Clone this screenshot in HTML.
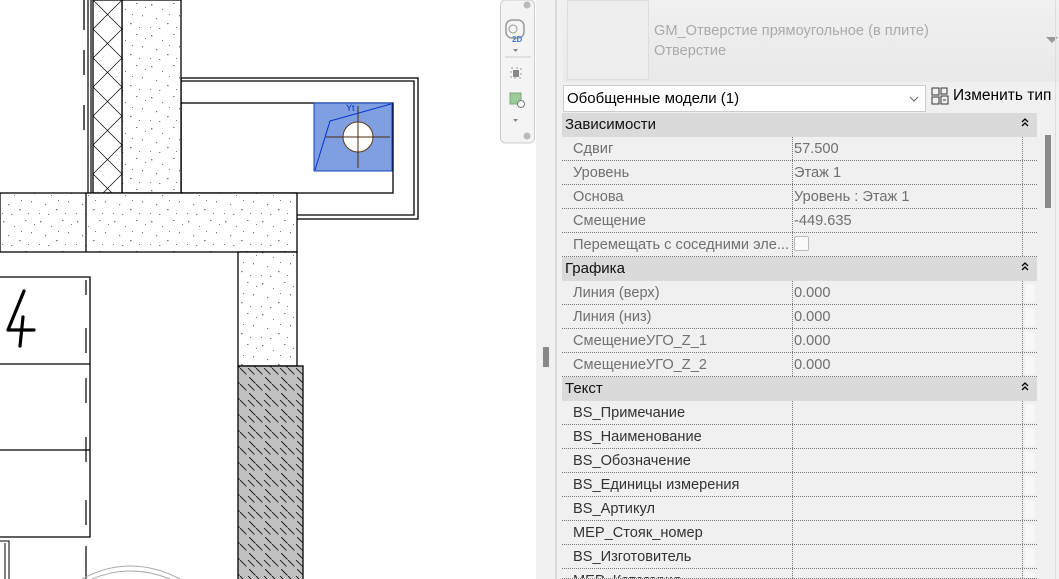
<!DOCTYPE html>
<html style="width:1059px;height:579px;overflow:hidden"><head><meta charset="utf-8"><style>
*{margin:0;padding:0;box-sizing:border-box}
body{width:1059px;height:579px;overflow:hidden;background:#fff;position:relative;font-family:"Segoe UI","Liberation Sans","DejaVu Sans",sans-serif;}
.p{position:absolute}
.row{position:absolute;left:562px;width:475px;height:24px;border-bottom:1px dotted #777;font-size:14.6px;line-height:24px;color:#333;overflow:hidden}
.row .n{position:absolute;left:11px;top:0;white-space:nowrap}
.row.g .n,.row.g .v{color:#707070}
.row .v{position:absolute;left:232px;top:0}
.row .d1{position:absolute;left:230px;top:0;bottom:0;border-left:1px dotted #777}
.row .d2{position:absolute;left:460px;top:0;bottom:0;border-left:1px dotted #777}
.row .c{position:absolute;left:463px;top:3px;width:10px;height:18px;background:#f7f7f7;border-radius:2px}
.hdr{position:absolute;left:562px;width:475px;height:24px;background:#dadada;font-size:15px;line-height:23px;color:#111;padding-left:3px}
.hdr svg{position:absolute;right:8px;top:4px}
</style></head><body>
<svg class="p" style="left:0;top:0" width="536" height="579" viewBox="0 0 536 579">
<defs>
<pattern id="conc" width="37" height="31" patternUnits="userSpaceOnUse">
<rect width="37" height="31" fill="#fff"/>
<g fill="#777"><rect x="3" y="4" width="1.4" height="1.4"/><rect x="14" y="9" width="1" height="1"/><rect x="25" y="3" width="1.5" height="1"/><rect x="31" y="15" width="1" height="1.4"/><rect x="8" y="18" width="1.2" height="1.2"/><rect x="19" y="23" width="1.6" height="1.2"/><rect x="28" y="27" width="1" height="1"/><rect x="2" y="27" width="1" height="1"/><rect x="21" y="14" width="1" height="1"/><rect x="11" y="28" width="1.3" height="1"/><rect x="34" y="7" width="1" height="1"/></g>
</pattern>
<pattern id="hat" width="16" height="16" patternUnits="userSpaceOnUse">
<rect width="16" height="16" fill="#c0c0c0"/><path d="M0 0L16 16M-8 8L0 16M8 0L16 8" stroke="#000" stroke-width="0.8" stroke-dasharray="9 4"/>
</pattern>
</defs>
<g stroke="#000" stroke-width="1.3" fill="none">
<rect x="181" y="78" width="237" height="141" fill="#fff"/>
<path d="M181 81H414V215H297"/>
<rect x="181" y="103" width="212" height="90"/>
</g>
<rect x="314" y="103" width="78" height="68" fill="#7f9fe0" stroke="#1040c0"/>
<path d="M315 170L330 121L391 104" stroke="#0030d0" fill="none"/>
<text x="346" y="111" font-size="9" fill="#0030c0" font-family="Liberation Sans">Yt</text>
<circle cx="358" cy="137" r="15" fill="#fff" stroke="#5a3a1a"/>
<path d="M326 137H390M358 106V168" stroke="#4a2a10"/>
<rect x="122" y="0" width="59" height="193" fill="url(#conc)" stroke="#000" stroke-width="1.3"/>
<rect x="93" y="0" width="29" height="193" fill="#fff" stroke="#000" stroke-width="1.3"/>
<path d="M93 0L122 29M122 0L93 29M93 29L122 58M122 29L93 58M93 58L122 87M122 58L93 87M93 87L122 116M122 87L93 116M93 116L122 145M122 116L93 145M93 145L122 174M122 145L93 174M93 174L112 193M122 174L103 193" stroke="#000" stroke-width="0.7"/>
<path d="M88 0V193M91 0V193" stroke="#000" stroke-width="1.2"/>
<path d="M84 0V30M84 50V75M84 105V130" stroke="#000" stroke-width="1.3"/>
<rect x="0" y="193" width="297" height="59" fill="url(#conc)" stroke="#000" stroke-width="1.3"/>
<path d="M86 193V252" stroke="#000" stroke-width="1.3"/>
<rect x="238" y="252" width="59" height="114" fill="url(#conc)" stroke="#000" stroke-width="1.3"/>
<rect x="238" y="366" width="65" height="220" fill="url(#hat)" stroke="#000" stroke-width="1.3"/>
<path d="M0 277H90V537H0M0 364H90M0 450H90" stroke="#000" stroke-width="1.3" fill="none"/>
<path d="M86 280V295M86 328V353M86 378V403M86 437V462M86 500V525M86 546V579" stroke="#000" stroke-width="1.2"/>
<path d="M0 541H9V579M5 543V579" stroke="#000" stroke-width="1" fill="none"/>
<path d="M24 291L8 330H34M23 317L20 346" stroke="#000" stroke-width="3.2" fill="none" stroke-linecap="round" stroke-linejoin="round"/>
<path d="M82 579Q130 553 180 579M92 579Q130 563 170 579" stroke="#aaa" fill="none"/>
<rect x="500.5" y="0" width="34" height="143" rx="5" fill="#f4f4f4" stroke="#ccc"/>
<circle cx="527" cy="5" r="3.5" fill="#bbb"/>
<rect x="506" y="20" width="18" height="18" rx="6" fill="none" stroke="#999" stroke-width="1.5"/>
<circle cx="513" cy="29" r="4" fill="none" stroke="#999"/>
<text x="512" y="42" font-size="8" fill="#4a7ad0" font-family="Liberation Sans" font-weight="bold">2D</text>
<path d="M513 49h5l-2.5 3z" fill="#888"/>
<path d="M505 57H531" stroke="#ccc"/>
<path d="M511 68h10v10h-10z" fill="none" stroke="#999" stroke-dasharray="2 3"/>
<path d="M513 70h6v7h-6z" fill="#888"/>
<rect x="510" y="93" width="11" height="11" fill="#9c9" stroke="#7a7"/>
<circle cx="521" cy="104" r="3.5" fill="#fff" stroke="#777"/>
<path d="M513 119h5l-2.5 3z" fill="#888"/>
<circle cx="527" cy="136" r="3.5" fill="#bbb"/>
</svg>
<div class="p" style="left:536px;top:0;width:523px;height:579px;background:#f0f0f0"></div>
<div class="p" style="left:555px;top:0;width:2px;height:579px;background:#d8d8d8"></div>
<div class="p" style="left:543px;top:347px;width:6px;height:20px;background:#888"></div>
<div class="p" style="left:563px;top:0;width:496px;height:82px;background:linear-gradient(#f0f0f0,#e9e9e9)"></div>
<div class="p" style="left:567px;top:0;width:82px;height:80px;border:1px solid #ddd;background:#eee"></div>
<div class="p" style="left:654px;top:21px;font-size:14.6px;color:#aaa;line-height:20px;white-space:nowrap">GM_Отверстие прямоугольное (в плите)<br>Отверстие</div>
<div class="p" style="left:1046px;top:37px;width:0;height:0;border-left:6px solid transparent;border-right:6px solid transparent;border-top:6px solid #999"></div>
<div class="p" style="left:563px;top:85px;width:363px;height:27px;background:#fff;border:1px solid #ccc;font-size:15px;line-height:25px;padding-left:3px;color:#000">Обобщенные модели (1)
<svg style="position:absolute;right:6px;top:10px" width="10" height="6"><path d="M1 1L5 5L9 1" stroke="#666" fill="none"/></svg></div>
<svg class="p" style="left:931px;top:87px" width="18" height="18"><g fill="none" stroke="#333"><rect x="1" y="1" width="7" height="7"/><rect x="1" y="10" width="7" height="7"/><rect x="10" y="1" width="6" height="6"/><rect x="10" y="9" width="7" height="8"/><path d="M12 13h3"/></g></svg>
<div class="p" style="left:953px;top:87px;font-size:15.5px;color:#000;white-space:nowrap">Изменить тип</div>
<div class="p" style="left:1045px;top:135px;width:6px;height:73px;background:#8a8a8a"></div>
<div class="p" style="left:1055px;top:0;width:1px;height:579px;background:#ddd"></div>

<div class="hdr" style="top:113px">Зависимости<svg width="8" height="10"><path d="M1 5L4 2L7 5M1 9L4 6L7 9" stroke="#000" stroke-width="1.3" fill="none"/></svg></div>
<div class="row g" style="top:137px"><span class="n">Сдвиг</span><span class="d1"></span><span class="v">57.500</span><span class="d2"></span></div>
<div class="row g" style="top:161px"><span class="n">Уровень</span><span class="d1"></span><span class="v">Этаж 1</span><span class="d2"></span></div>
<div class="row g" style="top:185px"><span class="n">Основа</span><span class="d1"></span><span class="v">Уровень : Этаж 1</span><span class="d2"></span></div>
<div class="row g" style="top:209px"><span class="n">Смещение</span><span class="d1"></span><span class="v">-449.635</span><span class="d2"></span></div>
<div class="row g" style="top:233px"><span class="n">Перемещать с соседними эле...</span><span class="d1"></span><span class="v" style="top:3px;width:15px;height:15px;border:1px solid #bbb;border-radius:2px;background:#fafafa"></span><span class="d2"></span></div>
<div class="hdr" style="top:257px">Графика<svg width="8" height="10"><path d="M1 5L4 2L7 5M1 9L4 6L7 9" stroke="#000" stroke-width="1.3" fill="none"/></svg></div>
<div class="row g" style="top:281px"><span class="n">Линия (верх)</span><span class="d1"></span><span class="v">0.000</span><span class="d2"></span><span class="c"></span></div>
<div class="row g" style="top:305px"><span class="n">Линия (низ)</span><span class="d1"></span><span class="v">0.000</span><span class="d2"></span><span class="c"></span></div>
<div class="row g" style="top:329px"><span class="n">СмещениеУГО_Z_1</span><span class="d1"></span><span class="v">0.000</span><span class="d2"></span><span class="c"></span></div>
<div class="row g" style="top:353px"><span class="n">СмещениеУГО_Z_2</span><span class="d1"></span><span class="v">0.000</span><span class="d2"></span><span class="c"></span></div>
<div class="hdr" style="top:377px">Текст<svg width="8" height="10"><path d="M1 5L4 2L7 5M1 9L4 6L7 9" stroke="#000" stroke-width="1.3" fill="none"/></svg></div>
<div class="row" style="top:401px"><span class="n">BS_Примечание</span><span class="d1"></span><span class="d2"></span><span class="c"></span></div>
<div class="row" style="top:425px"><span class="n">BS_Наименование</span><span class="d1"></span><span class="d2"></span><span class="c"></span></div>
<div class="row" style="top:449px"><span class="n">BS_Обозначение</span><span class="d1"></span><span class="d2"></span><span class="c"></span></div>
<div class="row" style="top:473px"><span class="n">BS_Единицы измерения</span><span class="d1"></span><span class="d2"></span><span class="c"></span></div>
<div class="row" style="top:497px"><span class="n">BS_Артикул</span><span class="d1"></span><span class="d2"></span><span class="c"></span></div>
<div class="row" style="top:521px"><span class="n">MEP_Стояк_номер</span><span class="d1"></span><span class="d2"></span><span class="c"></span></div>
<div class="row" style="top:545px"><span class="n">BS_Изготовитель</span><span class="d1"></span><span class="d2"></span><span class="c"></span></div>
<div class="row" style="top:569px;height:10px"><span class="n">MEP_Категория</span><span class="d1"></span><span class="d2"></span><span class="c"></span></div>
</body></html>
